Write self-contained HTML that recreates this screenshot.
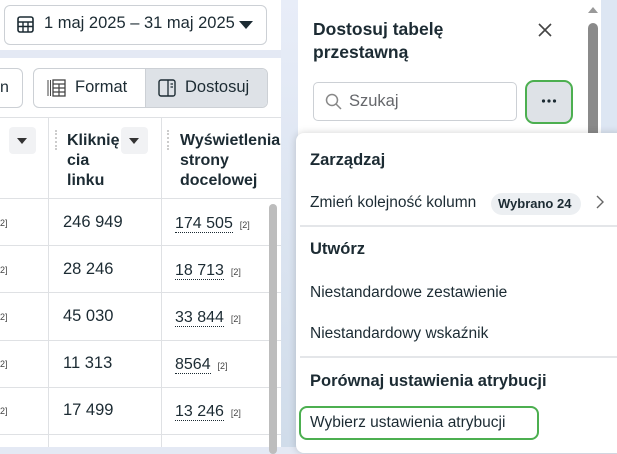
<!DOCTYPE html>
<html><head><meta charset="utf-8"><style>
*{margin:0;padding:0;box-sizing:border-box}
body{width:617px;height:447px;overflow:hidden;position:relative;background:#e4e9f4;font-family:"Liberation Sans",sans-serif;color:#1c2b33}
.a{position:absolute}
.t{font-size:15.5px;color:#1c2b33;white-space:nowrap}
.b{font-weight:bold}
.hl{position:absolute;height:1px;background:#dfe1e4}
.vl{position:absolute;width:1px;background:#dfe1e4}
.num{font-size:16px}
.u{border-bottom:1.5px dotted #1c2b33;line-height:16px}
.sm{font-size:9px;color:#444}
</style></head><body>
<div class="a" style="left:0;top:0;width:281px;height:50px;background:#fff"></div>
<div class="a" style="left:0;top:58px;width:281px;height:389px;background:#fff"></div>
<div class="a" style="left:281px;top:0;width:17px;height:447px;background:linear-gradient(#e8edf8,#d0dcea)"></div>
<div class="a" style="left:4px;top:5px;width:263px;height:40px;border:1px solid #ccd0d5;border-radius:6px"></div>
<svg class="a" style="left:17px;top:16px" width="17" height="17" viewBox="0 0 17 17"><rect x="1" y="1" width="15" height="15" rx="2" fill="none" stroke="#1c2b33" stroke-width="1.6"/><path d="M1 6h15M1 10.5h15M6 6v10M11 6v10" stroke="#1c2b33" stroke-width="1.4"/></svg>
<div class="a t" style="left:44px;top:14px;font-size:16.5px">1 maj 2025 – 31 maj 2025</div>
<div class="a" style="left:239px;top:21px;border-left:7px solid transparent;border-right:7px solid transparent;border-top:8px solid #1c2b33"></div>
<div class="a" style="left:-10px;top:68px;width:33px;height:40px;border:1px solid #ccd0d5;border-radius:6px"></div>
<div class="a t" style="left:0;top:79px;font-size:16px">n</div>
<div class="a" style="left:33px;top:68px;width:235px;height:40px;border:1px solid #ccd0d5;border-radius:6px;overflow:hidden"><div class="a" style="left:111px;top:0;width:124px;height:40px;background:#dee2e7;border-left:1px solid #ccd0d5"></div></div>
<svg class="a" style="left:47px;top:79px" width="19" height="18" viewBox="0 0 19 18"><path d="M1 1v16M3.5 1v16" stroke="#444" stroke-width="1"/><rect x="6" y="1" width="12" height="16" fill="none" stroke="#444" stroke-width="1.3"/><path d="M6 5h12M6 9h12M6 13h12M12 5v12" stroke="#444" stroke-width="1.2"/></svg>
<div class="a t" style="left:75px;top:78px;font-size:16.5px">Format</div>
<svg class="a" style="left:158px;top:79px" width="18" height="18" viewBox="0 0 18 18"><rect x="1" y="1" width="16" height="16" rx="2" fill="none" stroke="#1c2b33" stroke-width="1.4"/><path d="M10 1v16M12.5 5h2.5M12.5 8h2.5" stroke="#1c2b33" stroke-width="1.3"/></svg>
<div class="a t" style="left:185px;top:78px;font-size:16.5px">Dostosuj</div>
<div class="hl" style="left:0;top:117px;width:281px"></div>
<div class="vl" style="left:48px;top:117px;height:330px"></div>
<div class="vl" style="left:161px;top:117px;height:330px"></div>
<div class="a" style="left:9px;top:127px;width:27px;height:27px;background:#f1f2f4;border-radius:4px"></div>
<div class="a" style="left:17px;top:138px;border-left:5px solid transparent;border-right:5px solid transparent;border-top:6px solid #333"></div>
<div class="a" style="left:121px;top:127px;width:27px;height:27px;background:#f1f2f4;border-radius:4px"></div>
<div class="a" style="left:129px;top:138px;border-left:5px solid transparent;border-right:5px solid transparent;border-top:6px solid #333"></div>
<div class="a" style="left:55px;top:130px;width:2px;height:20px;border-left:2px dotted #ccc"></div>
<div class="a" style="left:167px;top:130px;width:2px;height:20px;border-left:2px dotted #ccc"></div>
<div class="a t b" style="left:67px;top:131px;line-height:20px;font-size:16px">Kliknię<br>cia<br>linku</div>
<div class="a t b" style="left:180px;top:131px;line-height:20px;font-size:16px">Wyświetlenia<br>strony<br>docelowej</div>
<div class="hl" style="left:0;top:198px;width:281px"></div>
<div class="hl" style="left:0;top:245px;width:281px"></div>
<div class="hl" style="left:0;top:292px;width:281px"></div>
<div class="hl" style="left:0;top:340px;width:281px"></div>
<div class="hl" style="left:0;top:387px;width:281px"></div>
<div class="hl" style="left:0;top:434px;width:281px"></div>
<div class="a sm" style="left:0;top:218px">2]</div><div class="a sm" style="left:0;top:265px">2]</div><div class="a sm" style="left:0;top:312px">2]</div><div class="a sm" style="left:0;top:359px">2]</div><div class="a sm" style="left:0;top:406px">2]</div>
<div class="a t num" style="left:63px;top:213px;font-size:16.5px">246 949</div>
<div class="a t num" style="left:63px;top:260px;font-size:16.5px">28 246</div>
<div class="a t num" style="left:63px;top:307px;font-size:16.5px">45 030</div>
<div class="a t num" style="left:63px;top:354px;font-size:16.5px">11 313</div>
<div class="a t num" style="left:63px;top:401px;font-size:16.5px">17 499</div>
<div class="a t num" style="left:175px;top:215px"><span class="u">174 505</span> <span class="sm">&nbsp;[2]</span></div>
<div class="a t num" style="left:175px;top:262px"><span class="u">18 713</span> <span class="sm">&nbsp;[2]</span></div>
<div class="a t num" style="left:175px;top:309px"><span class="u">33 844</span> <span class="sm">&nbsp;[2]</span></div>
<div class="a t num" style="left:175px;top:356px"><span class="u">8564</span> <span class="sm">&nbsp;[2]</span></div>
<div class="a t num" style="left:175px;top:403px"><span class="u">13 246</span> <span class="sm">&nbsp;[2]</span></div>
<div class="a" style="left:269px;top:204px;width:8px;height:250px;background:#bdbdbd;border-radius:4px"></div>
<div class="a" style="left:298px;top:0;width:303px;height:447px;background:#fff;border-radius:0 0 8px 8px"></div>
<div class="a" style="left:601px;top:0;width:16px;height:447px;background:#dde6f3"></div>
<div class="a" style="left:588px;top:7px;border-left:5px solid transparent;border-right:5px solid transparent;border-bottom:6px solid #999"></div>
<div class="a" style="left:588px;top:23px;width:10px;height:115px;background:#8a8a8a;border-radius:5px"></div>
<div class="a t b" style="left:313px;top:18px;font-size:17.5px;line-height:23px">Dostosuj tabelę<br>przestawną</div>
<svg class="a" style="left:538px;top:23px" width="14" height="14" viewBox="0 0 14 14"><path d="M1 1l12 12M13 1L1 13" stroke="#444" stroke-width="1.6"/></svg>
<div class="a" style="left:313px;top:82px;width:204px;height:39px;border:1px solid #ccd0d5;border-radius:5px"></div>
<svg class="a" style="left:325px;top:93px" width="17" height="17" viewBox="0 0 17 17"><circle cx="7" cy="7" r="5.5" fill="none" stroke="#888" stroke-width="1.5"/><path d="M11 11l5 5" stroke="#888" stroke-width="1.5"/></svg>
<div class="a t" style="left:349px;top:92px;font-size:16.5px;color:#65676b">Szukaj</div>
<div class="a" style="left:525px;top:80px;width:48px;height:44px;border:2.5px solid #4caf50;border-radius:9px;background:#dee2e7"></div>
<svg class="a" style="left:541px;top:99px" width="16" height="4" viewBox="0 0 16 4"><circle cx="2.5" cy="2" r="1.6" fill="#1c2b33"/><circle cx="8" cy="2" r="1.6" fill="#1c2b33"/><circle cx="13.5" cy="2" r="1.6" fill="#1c2b33"/></svg>
<div class="a" style="left:296px;top:133px;width:330px;height:320px;background:#fff;border-radius:8px;box-shadow:0 0 8px rgba(0,0,0,.18)"></div>
<div class="a t b" style="left:310px;top:151px;font-size:16.5px">Zarządzaj</div>
<div class="a t" style="left:310px;top:194px">Zmień kolejność kolumn</div>
<div class="a" style="left:491px;top:193px;width:90px;height:22px;background:#eceff2;border-radius:11px"></div>
<div class="a t b" style="left:498px;top:196px;font-size:13px">Wybrano 24</div>
<svg class="a" style="left:596px;top:195px" width="8" height="14" viewBox="0 0 8 14"><path d="M1 1l6 6-6 6" fill="none" stroke="#666" stroke-width="1.4"/></svg>
<div class="hl" style="left:300px;top:225px;width:317px;height:2px;background:#e4e6e9"></div>
<div class="a t b" style="left:310px;top:240px;font-size:16.5px">Utwórz</div>
<div class="a t" style="left:310px;top:284px">Niestandardowe zestawienie</div>
<div class="a t" style="left:310px;top:325px">Niestandardowy wskaźnik</div>
<div class="hl" style="left:300px;top:356px;width:317px;height:2px;background:#e4e6e9"></div>
<div class="a t b" style="left:310px;top:372px;font-size:16.5px">Porównaj ustawienia atrybucji</div>
<div class="a" style="left:299px;top:406px;width:240px;height:34px;border:2.5px solid #4caf50;border-radius:8px"></div>
<div class="a t" style="left:310px;top:414px">Wybierz ustawienia atrybucji</div>
</body></html>
